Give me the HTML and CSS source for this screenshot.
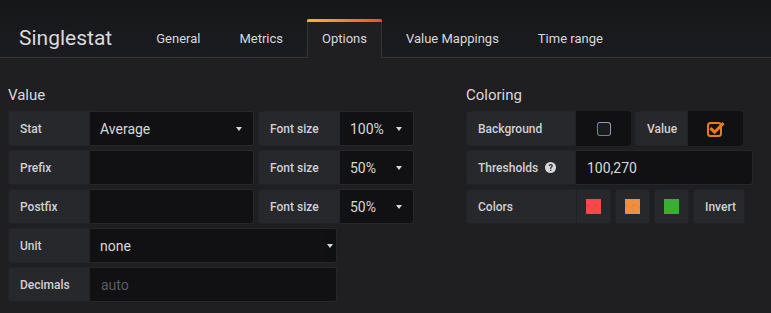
FILE: index.html
```html
<!DOCTYPE html>
<html lang="en">

<head>
    <meta charset="UTF-8">
    <title>Singlestat</title>
    <link rel="stylesheet" href="styles.css">
</head>

<body>
    <div class="header">
        <h2 class="title">Singlestat</h2>
        <ul class="tabs">
            <li class="tab">General</li>
            <li class="tab">Metrics</li>
            <li class="tab active">Options</li>
            <li class="tab">Value Mappings</li>
            <li class="tab">Time range</li>
        </ul>
    </div>

    <div class="content">
        <div class="section section-value">
            <h5 class="section-heading">Value</h5>
            <div class="form-row">
                <div class="form-group">
                    <span class="label w-6">Stat</span>
                    <div class="select w-12"><span>Average</span><i class="caret"></i></div>
                </div>
                <div class="form-group">
                    <span class="label w-6">Font size</span>
                    <div class="select w-5"><span>100%</span><i class="caret"></i></div>
                </div>
            </div>
            <div class="form-row">
                <div class="form-group">
                    <span class="label w-6">Prefix</span>
                    <div class="input w-12"></div>
                </div>
                <div class="form-group">
                    <span class="label w-6">Font size</span>
                    <div class="select w-5"><span>50%</span><i class="caret"></i></div>
                </div>
            </div>
            <div class="form-row">
                <div class="form-group">
                    <span class="label w-6">Postfix</span>
                    <div class="input w-12"></div>
                </div>
                <div class="form-group">
                    <span class="label w-6">Font size</span>
                    <div class="select w-5"><span>50%</span><i class="caret"></i></div>
                </div>
            </div>
            <div class="form-row">
                <div class="form-group">
                    <span class="label w-6">Unit</span>
                    <div class="select unit w-unit"><span>none</span><i class="caret"></i></div>
                </div>
            </div>
            <div class="form-row">
                <div class="form-group">
                    <span class="label w-6">Decimals</span>
                    <div class="input w-unit"><span class="placeholder">auto</span></div>
                </div>
            </div>
        </div>

        <div class="section section-coloring">
            <h5 class="section-heading">Coloring</h5>
            <div class="form-row">
                <div class="form-group">
                    <span class="label w-8">Background</span>
                    <div class="check-cell"><i class="checkbox"></i></div>
                </div>
                <div class="form-group">
                    <span class="label w-value">Value</span>
                    <div class="check-cell">
                        <svg class="checkbox-on" width="18" height="16" viewBox="0 0 18 16">
                            <rect x="1" y="2" width="13" height="13" rx="2.5" fill="none" stroke="#eb7b18" stroke-width="2"/>
                            <path d="M4.5 8.2 L7.6 11.2 L15.5 3.2" fill="none" stroke="#eb7b18" stroke-width="3" stroke-linecap="square"/>
                        </svg>
                    </div>
                </div>
            </div>
            <div class="form-row">
                <div class="form-group">
                    <span class="label w-8">Thresholds <i class="help">?</i></span>
                    <div class="input w-thresh"><span>100,270</span></div>
                </div>
            </div>
            <div class="form-row">
                <div class="form-group">
                    <span class="label w-8">Colors</span>
                    <div class="swatch-cell"><i class="swatch red"></i></div>
                </div>
                <div class="form-group">
                    <div class="swatch-cell"><i class="swatch orange"></i></div>
                </div>
                <div class="form-group">
                    <div class="swatch-cell"><i class="swatch green"></i></div>
                </div>
                <div class="form-group">
                    <span class="label w-invert">Invert</span>
                </div>
            </div>
        </div>
    </div>
</body>

</html>
```

FILE: styles.css
```css
* {
    box-sizing: border-box;
}

body {
    margin: 0;
    background: #1f1f22;
    color: #d8d9da;
    font-family: Roboto, "Liberation Sans", sans-serif;
}

.header {
    height: 58px;
    display: flex;
    align-items: flex-end;
    padding-left: 19px;
    border-bottom: 1px solid #333438;
    background: linear-gradient(to bottom, #161719, #1b1c1f);
}

.title {
    margin: 0 29px 0 0;
    font-size: 21px;
    font-weight: 400;
    line-height: 38px;
    color: #d8d9da;
}

.tabs {
    display: flex;
    margin: 0 0 -1px 0;
    padding: 0;
    list-style: none;
}

.tab {
    height: 39px;
    line-height: 38px;
    padding: 0 14px;
    margin-right: 9px;
    font-size: 13px;
    color: #d8d9da;
    border: 1px solid transparent;
    border-bottom: 0;
}

.tab.active {
    position: relative;
    background: #1f1f22;
    border-color: #333438;
}

.tab.active::before {
    content: "";
    position: absolute;
    left: -1px;
    right: -1px;
    top: -1px;
    height: 3px;
    border-radius: 2px 2px 0 0;
    background: linear-gradient(to right, #ffb52e, #f9842a 50%, #f24f23);
}

.content {
    display: flex;
    padding: 27px 0 0 8px;
}

.section-value {
    width: 458px;
}

.section-heading {
    margin: 0 0 6px 0;
    font-size: 15px;
    font-weight: 400;
    line-height: 20px;
    color: #d8d9da;
}

.form-row {
    display: flex;
    gap: 4px;
    margin-bottom: 4px;
}

.form-group {
    display: flex;
    height: 35px;
}

.label {
    display: flex;
    align-items: center;
    padding-left: 11px;
    font-size: 12px;
    font-weight: 500;
    color: #d0d1d3;
    background: #27282b;
    border: 1px solid #222326;
    border-radius: 3px 0 0 3px;
    white-space: nowrap;
}

.w-6 {
    width: 82px;
}

.w-8 {
    width: 110px;
}

.w-value {
    width: 53px;
}

.w-invert {
    width: 52px;
    border-radius: 3px;
}

.w-12 {
    width: 164px;
}

.w-5 {
    width: 74px;
}

.w-unit {
    width: 247px;
}

.w-thresh {
    width: 177px;
}

.input,
.select {
    display: flex;
    align-items: center;
    padding-left: 10px;
    font-size: 14px;
    background: #111113;
    border: 1px solid #26272a;
    border-left: 0;
    border-radius: 0 3px 3px 0;
}

.placeholder {
    color: #5a5c60;
}

.select {
    justify-content: space-between;
    padding-right: 11px;
}

.select.unit {
    padding-right: 3px;
    background: linear-gradient(to right, #111113 235px, #0f1012 235px);
}

.caret {
    width: 0;
    height: 0;
    border-left: 3.5px solid transparent;
    border-right: 3.5px solid transparent;
    border-top: 4px solid #d8d9da;
}

.input .placeholder,
.w-thresh span {
    padding-left: 1px;
}

.check-cell {
    width: 55px;
    display: flex;
    align-items: center;
    justify-content: center;
    background: #111113;
    border-radius: 0 3px 3px 0;
}

.checkbox {
    width: 14px;
    height: 14px;
    border-radius: 3px;
    border: 1.5px solid #8f9aab;
    border-left-color: #5e85b5;
    border-bottom-color: #6f7d90;
    background: #1a1b1e;
}

.checkbox-on {
    display: block;
    margin-left: 1px;
}

.help {
    display: inline-flex;
    align-items: center;
    justify-content: center;
    width: 11px;
    height: 11px;
    margin-left: 7px;
    border-radius: 50%;
    background: #d8d9da;
    color: #27282b;
    font-size: 9px;
    font-weight: 700;
    font-style: normal;
}

.swatch-cell {
    width: 35px;
    display: flex;
    align-items: center;
    justify-content: center;
    background: #27282b;
    border: 1px solid #222326;
    border-radius: 3px;
}

.section-coloring .form-row:last-child .form-group:first-child .label {
    border-right: 0;
}

.section-coloring .form-row:last-child .form-group:first-child .swatch-cell {
    border-radius: 0 3px 3px 0;
    border-left: 1px solid #1f2023;
}

.swatch {
    width: 15px;
    height: 15px;
    background-color: #fff;
    background-size: 7px 7px, 7px 7px;
}

.swatch.red {
    background-image: linear-gradient(rgba(245, 54, 54, 0.9), rgba(245, 54, 54, 0.9)),
        linear-gradient(45deg, #ccc 25%, transparent 25%, transparent 75%, #ccc 75%);
    background-size: auto, 8px 8px;
}

.swatch.orange {
    background-image: linear-gradient(rgba(237, 129, 40, 0.89), rgba(237, 129, 40, 0.89)),
        linear-gradient(45deg, #ccc 25%, transparent 25%, transparent 75%, #ccc 75%);
    background-size: auto, 8px 8px;
}

.swatch.green {
    background-image: linear-gradient(rgba(50, 172, 45, 0.97), rgba(50, 172, 45, 0.97));
    background-size: auto;
}
```
